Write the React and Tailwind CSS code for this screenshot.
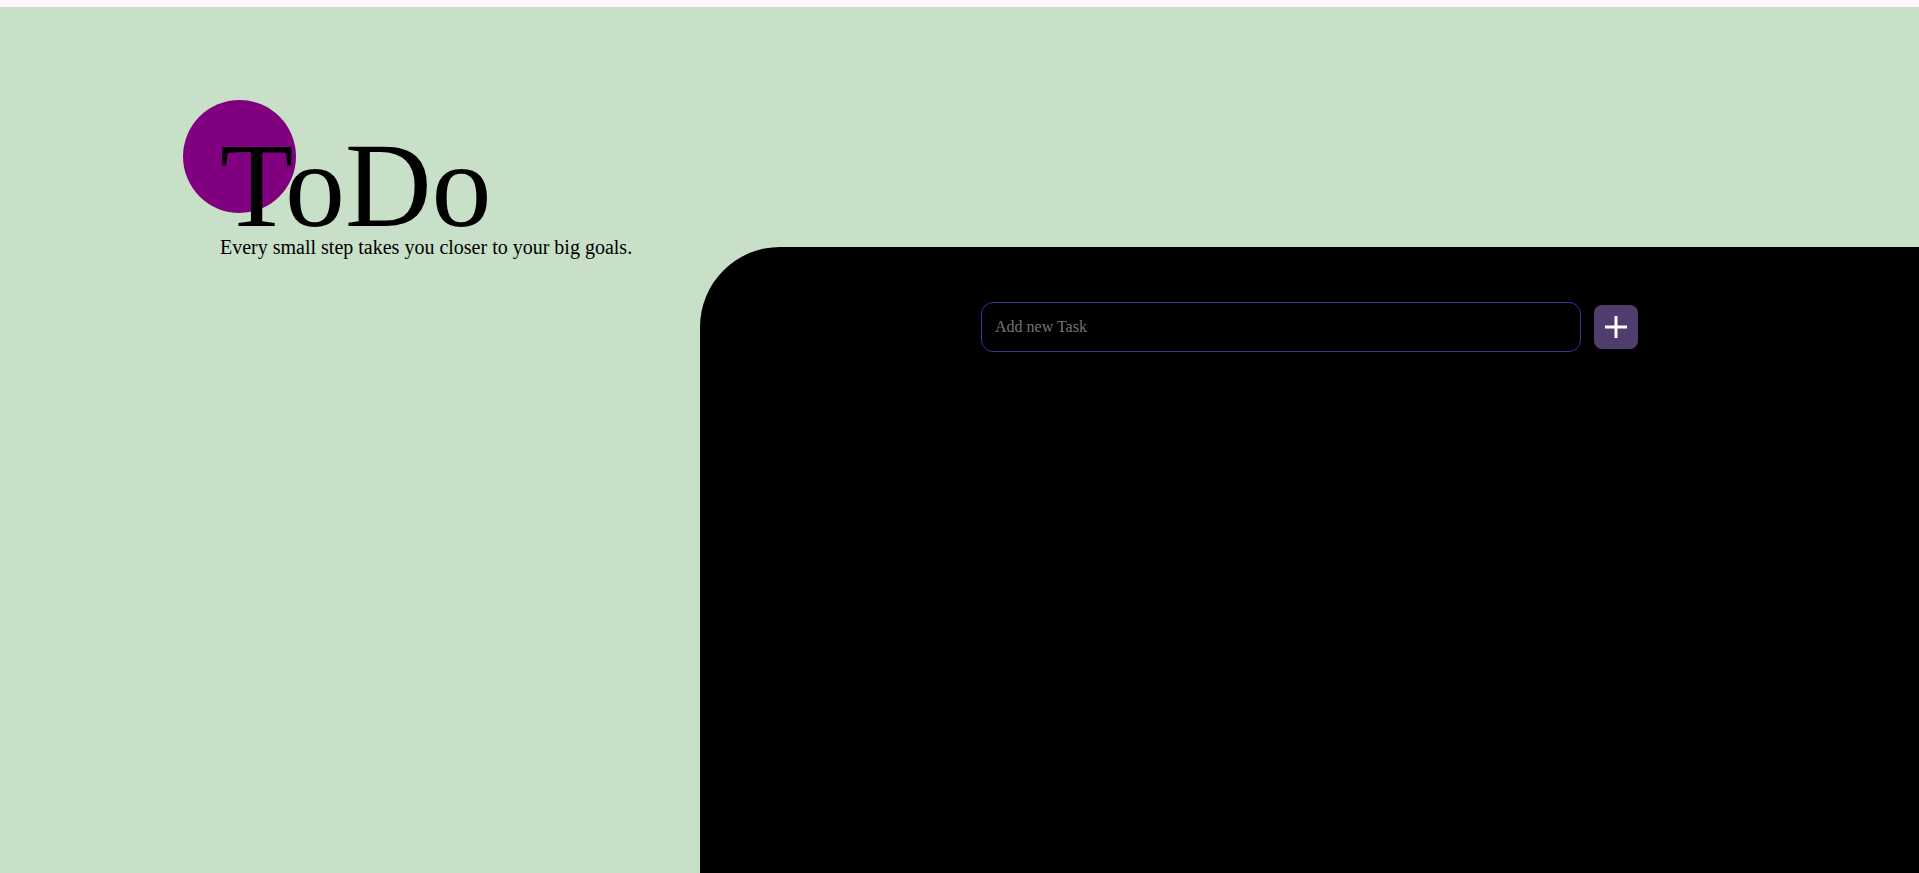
export default function App() {
  return (
    <div className="min-h-screen bg-[#c8dfc8] font-['Liberation_Serif',serif] overflow-hidden">
      <div className="h-[7px] bg-[#fff5f8]" />

      <header className="relative h-[240px] pl-[220px] pt-[129px]">
        <div className="absolute left-[183px] top-[93px] w-[113px] h-[113px] rounded-full bg-[#800080]" />
        <h1 className="relative text-[120px] leading-[100px] text-black">ToDo</h1>
        <p className="relative mt-[1px] text-[20px] leading-[20px] text-black">
          Every small step takes you closer to your big goals.
        </p>
      </header>

      <main className="ml-[700px] min-h-[626px] bg-black rounded-tl-[80px] pt-[55px]">
        <form className="flex items-center justify-center gap-[13px]" onSubmit={(e) => e.preventDefault()}>
          <input
            type="text"
            placeholder="Add new Task"
            className="w-[600px] h-[50px] rounded-[12px] border border-[#35359a] bg-black px-[13px] text-[16px] text-white placeholder:text-[#757575] outline-none"
          />
          <button
            type="submit"
            className="flex items-center justify-center w-[44px] h-[44px] rounded-[8px] bg-[#513d6d]"
          >
            <svg width="24" height="24" viewBox="0 0 24 24" fill="none">
              <path d="M12 1v22M1 12h22" stroke="white" strokeWidth="3" />
            </svg>
          </button>
        </form>
      </main>
    </div>
  );
}
